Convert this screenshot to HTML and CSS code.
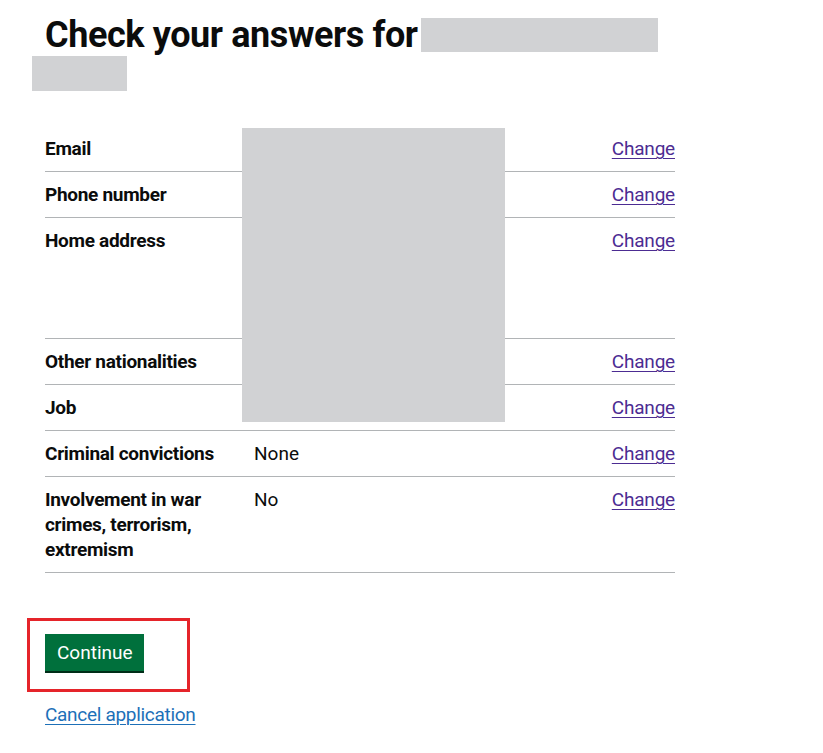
FILE: index.html
```html
<!DOCTYPE html>
<html lang="en">

<head>
    <meta charset="UTF-8">
    <meta name="viewport" content="width=device-width, initial-scale=1.0">
    <title>Check your answers</title>
    <link rel="stylesheet" href="styles.css">
</head>

<body>
    <main class="page">
        <h1 class="heading">Check your answers for<span class="redact redact-name"></span><br><span class="redact redact-surname"></span></h1>

        <div class="summary">
            <div class="redact redact-values"></div>

            <div class="summary-row">
                <div class="summary-key">Email</div>
                <div class="summary-value"></div>
                <div class="summary-actions"><a href="#">Change</a></div>
            </div>
            <div class="summary-row">
                <div class="summary-key">Phone number</div>
                <div class="summary-value"></div>
                <div class="summary-actions"><a href="#">Change</a></div>
            </div>
            <div class="summary-row">
                <div class="summary-key">Home address</div>
                <div class="summary-value address"></div>
                <div class="summary-actions"><a href="#">Change</a></div>
            </div>
            <div class="summary-row">
                <div class="summary-key">Other nationalities</div>
                <div class="summary-value"></div>
                <div class="summary-actions"><a href="#">Change</a></div>
            </div>
            <div class="summary-row">
                <div class="summary-key">Job</div>
                <div class="summary-value"></div>
                <div class="summary-actions"><a href="#">Change</a></div>
            </div>
            <div class="summary-row">
                <div class="summary-key">Criminal convictions</div>
                <div class="summary-value">None</div>
                <div class="summary-actions"><a href="#">Change</a></div>
            </div>
            <div class="summary-row">
                <div class="summary-key">Involvement in war crimes, terrorism, extremism</div>
                <div class="summary-value">No</div>
                <div class="summary-actions"><a href="#">Change</a></div>
            </div>
        </div>

        <div class="highlight">
            <button class="button" type="submit">Continue</button>
        </div>

        <p class="cancel"><a href="#">Cancel application</a></p>
    </main>
</body>

</html>
```

FILE: styles.css
```css
body {
    margin: 0;
    background-color: #ffffff;
    color: #0b0c0c;
    font-family: Roboto, "Liberation Sans", Arial, sans-serif;
}

.page {
    width: 630px;
    margin-left: 45px;
}

.heading {
    margin: 15px 0 31px;
    font-size: 36px;
    line-height: 40px;
    font-weight: 700;
    letter-spacing: -0.4px;
}

.redact {
    background-color: #d1d2d4;
}

.redact-name {
    display: inline-block;
    vertical-align: top;
    width: 237px;
    height: 34px;
    margin: 3px 0 0 3px;
}

.redact-surname {
    display: inline-block;
    vertical-align: top;
    width: 95px;
    height: 35px;
    margin: 1px 0 0 -13px;
}

.summary {
    position: relative;
    margin-bottom: 45px;
    font-size: 19px;
    line-height: 25px;
}

.redact-values {
    position: absolute;
    top: 2px;
    left: 197px;
    width: 263px;
    height: 294px;
}

.summary-row {
    display: flex;
    border-bottom: 1px solid #b1b4b6;
}

.summary-key,
.summary-value,
.summary-actions {
    padding: 10px 20px 10px 0;
}

.summary-key {
    flex: 0 0 189px;
    font-weight: 700;
    letter-spacing: -0.3px;
}

.summary-value {
    flex: 1;
    min-height: 25px;
}

.summary-value.address {
    min-height: 100px;
}

.summary-actions {
    flex: 0 0 126px;
    padding-right: 0;
    text-align: right;
}

.summary-actions a {
    color: #4c2c92;
    text-decoration: underline;
    text-decoration-thickness: 1px;
    text-underline-offset: 3px;
    letter-spacing: -0.2px;
}

.highlight {
    display: inline-block;
    margin-left: -18px;
    padding: 13px 43px 18px 15px;
    border: 3px solid #e5242a;
}

.button {
    display: block;
    margin: 0;
    padding: 8px 11px 7px 12px;
    height: 37px;
    border: none;
    border-radius: 0;
    background-color: #00703c;
    box-shadow: 0 2px 0 #002d18;
    color: #ffffff;
    font-family: Roboto, "Liberation Sans", Arial, sans-serif;
    font-size: 19px;
    line-height: 22px;
    cursor: pointer;
}

.cancel {
    margin: 10px 0 0;
    font-size: 19px;
    line-height: 25px;
}

.cancel a {
    color: #1d70b8;
    text-decoration: underline;
    text-decoration-thickness: 1px;
    text-underline-offset: 3px;
    letter-spacing: -0.3px;
}
```
